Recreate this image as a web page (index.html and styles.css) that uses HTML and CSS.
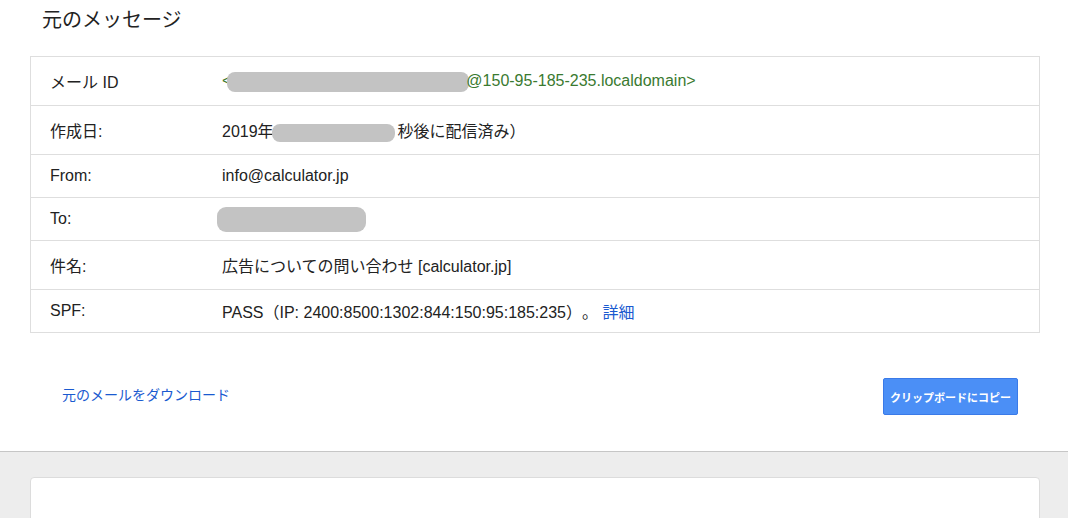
FILE: index.html
```html
<!DOCTYPE html>
<html lang="ja">
<head>
<meta charset="utf-8">
<title>元のメッセージ</title>
<link rel="stylesheet" href="styles.css">
</head>
<body>
<div class="top">
  <div class="header"><h1 class="title">元のメッセージ</h1></div>
  <table class="info">
    <tr class="tall">
      <td class="label">メール ID</td>
      <td class="value green">&lt;<span class="redact redact-id"></span>@150-95-185-235.localdomain&gt;</td>
    </tr>
    <tr class="tall">
      <td class="label">作成日:</td>
      <td class="value">2019年<span class="redact redact-date"></span>秒後に配信済み）</td>
    </tr>
    <tr class="short">
      <td class="label">From:</td>
      <td class="value">info@calculator.jp</td>
    </tr>
    <tr class="short">
      <td class="label">To:</td>
      <td class="value"><span class="redact redact-to"></span></td>
    </tr>
    <tr class="tall">
      <td class="label">件名:</td>
      <td class="value">広告についての問い合わせ [calculator.jp]</td>
    </tr>
    <tr class="short">
      <td class="label">SPF:</td>
      <td class="value">PASS（IP: 2400:8500:1302:844:150:95:185:235）。 <a class="link" href="#">詳細</a></td>
    </tr>
  </table>
  <div class="actions">
    <a class="link download" href="#">元のメールをダウンロード</a>
    <button class="copy-btn" type="button">クリップボードにコピー</button>
  </div>
</div>
<div class="bottom">
  <div class="card"></div>
</div>
</body>
</html>
```

FILE: styles.css
```css
html, body {
  margin: 0;
  padding: 0;
  background: #ededed;
  overflow: hidden;
}
body {
  font-family: "Liberation Sans", Arial, "Noto Sans CJK JP", sans-serif;
  font-size: 16px;
  color: #222;
  text-spacing-trim: space-all;
}
.top {
  background: #fff;
  border-bottom: 1px solid #c6c6c6;
}
.header {
  height: 56px;
  box-sizing: border-box;
  padding: 6px 0 0 42px;
}
.title {
  margin: 0;
  font-size: 20px;
  font-weight: normal;
  line-height: 28px;
  color: #222;
}
.info {
  margin: 0 28px 0 30px;
  width: 1010px;
  border: 1px solid #dedede;
  border-spacing: 0;
  border-collapse: separate;
}
.info td {
  padding: 0;
  vertical-align: middle;
  border-top: 1px solid #dedede;
}
.info tr:first-child td {
  border-top: none;
}
.info tr.tall td { height: 48px; }
.info tr.short td { height: 42px; }
.label {
  width: 172px;
  padding-left: 19px !important;
  box-sizing: content-box;
}
.value { white-space: nowrap; }
.green { color: #3a7a30; }
.redact {
  display: inline-block;
  background: #c3c3c3;
  border-radius: 8px;
  vertical-align: middle;
}
.redact-id {
  width: 242px;
  height: 20px;
  margin: -4px -3px -4px -4px;
}
.redact-date {
  width: 123px;
  height: 18px;
  margin: -4px 3px -4px -2px;
}
.redact-to {
  width: 149px;
  height: 25px;
  margin: -8px 0 -8px -5px;
  border-radius: 9px;
}
.link {
  color: #1a5ad0;
  text-decoration: none;
}
.actions {
  display: flex;
  justify-content: space-between;
  align-items: center;
  margin: 45px 50px 0 62px;
  padding-bottom: 36px;
}
.download {
  font-size: 14px;
  margin-bottom: 5px;
}
.copy-btn {
  height: 37px;
  padding: 0 6px;
  background: #4b8ff6;
  border: 1px solid #3a7ae8;
  border-radius: 2px;
  color: #fff;
  font-family: "Liberation Sans", Arial, "Noto Sans CJK JP", sans-serif;
  font-size: 11px;
  font-weight: bold;
  cursor: pointer;
}
.bottom {
  padding: 25px 28px 0 30px;
}
.card {
  height: 120px;
  background: #fff;
  border: 1px solid #dcdcdc;
  border-radius: 4px;
}
```
